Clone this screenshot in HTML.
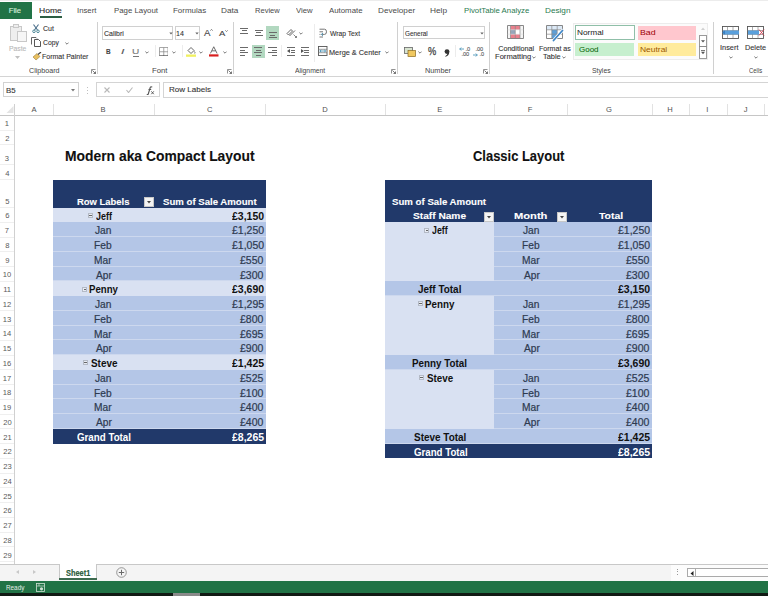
<!DOCTYPE html>
<html><head><meta charset="utf-8"><style>
html,body{margin:0;padding:0;}
body{width:768px;height:596px;overflow:hidden;position:relative;background:#fff;font-family:'Liberation Sans', sans-serif;}
</style></head><body>
<div style="position:absolute;left:0px;top:0px;width:768px;height:20px;background:#ffffff;"></div><div style="position:absolute;left:0px;top:0px;width:768px;height:1.4px;background:#ececec;"></div><div style="position:absolute;left:0px;top:2px;width:31.7px;height:16.7px;background:#217346;"></div><div style="position:absolute;left:40.3px;top:16.0px;width:21.8px;height:1.9px;background:#2d5e43;"></div><div style="position:absolute;left:0px;top:20px;width:768px;height:56px;background:#ffffff;"></div><div style="position:absolute;left:0px;top:75.6px;width:768px;height:1px;background:#d4d4d4;"></div><div style="position:absolute;left:96.5px;top:22px;width:1px;height:52px;background:#d0d0d0;"></div><div style="position:absolute;left:232.7px;top:22px;width:1px;height:52px;background:#d0d0d0;"></div><div style="position:absolute;left:396.8px;top:22px;width:1px;height:52px;background:#d0d0d0;"></div><div style="position:absolute;left:489.2px;top:22px;width:1px;height:52px;background:#d0d0d0;"></div><div style="position:absolute;left:713.4px;top:22px;width:1px;height:52px;background:#d0d0d0;"></div><svg style="position:absolute;left:90.5px;top:68.5px" width="5" height="5" viewBox="0 0 5 5"><path d="M0.5 4.5V0.5H4.5" fill="none" stroke="#777" stroke-width="0.8"/><path d="M1.5 1.5L4.5 4.5M4.5 2.5V4.5H2.5" fill="none" stroke="#555" stroke-width="0.8"/></svg><svg style="position:absolute;left:227.0px;top:68.5px" width="5" height="5" viewBox="0 0 5 5"><path d="M0.5 4.5V0.5H4.5" fill="none" stroke="#777" stroke-width="0.8"/><path d="M1.5 1.5L4.5 4.5M4.5 2.5V4.5H2.5" fill="none" stroke="#555" stroke-width="0.8"/></svg><svg style="position:absolute;left:390.8px;top:68.5px" width="5" height="5" viewBox="0 0 5 5"><path d="M0.5 4.5V0.5H4.5" fill="none" stroke="#777" stroke-width="0.8"/><path d="M1.5 1.5L4.5 4.5M4.5 2.5V4.5H2.5" fill="none" stroke="#555" stroke-width="0.8"/></svg><svg style="position:absolute;left:482.8px;top:68.5px" width="5" height="5" viewBox="0 0 5 5"><path d="M0.5 4.5V0.5H4.5" fill="none" stroke="#777" stroke-width="0.8"/><path d="M1.5 1.5L4.5 4.5M4.5 2.5V4.5H2.5" fill="none" stroke="#555" stroke-width="0.8"/></svg><svg style="position:absolute;left:9px;top:23px" width="20" height="20" viewBox="0 0 20 20"><rect x="1.5" y="3.5" width="11" height="14" fill="#eee" stroke="#c8c8c8"/><rect x="4.5" y="1.5" width="5" height="3" fill="#eee" stroke="#c8c8c8"/><rect x="8.5" y="8.5" width="9" height="10" fill="#f6f6f6" stroke="#c8c8c8"/></svg><svg style="position:absolute;left:15px;top:56px" width="5" height="3" viewBox="0 0 5 3"><path d="M0 0L2.5 3L5 0Z" fill="#c0c0c0"/></svg><svg style="position:absolute;left:32px;top:24px" width="8" height="9" viewBox="0 0 8 9"><path d="M1.5 0.5L5.5 6M6.5 0.5L2.5 6" stroke="#4a6e8a" stroke-width="1.1" fill="none"/><circle cx="2" cy="7.3" r="1.3" fill="none" stroke="#3f7f8f" stroke-width="0.9"/><circle cx="6" cy="7.3" r="1.3" fill="none" stroke="#3f7f8f" stroke-width="0.9"/></svg><svg style="position:absolute;left:31px;top:37px" width="10" height="10" viewBox="0 0 10 10"><path d="M0.5 7.5V0.5H5L6 1.5" fill="none" stroke="#555" stroke-width="0.9"/><path d="M3.5 2.5H7.5L9.5 4.5V9.5H3.5Z" fill="#fff" stroke="#444" stroke-width="0.9"/></svg><svg style="position:absolute;left:64.8px;top:42.2px" width="4" height="3" viewBox="0 0 4 3"><path d="M0.4 0.6L2 2.2L3.6 0.6" fill="none" stroke="#606060" stroke-width="0.85"/></svg><svg style="position:absolute;left:31.5px;top:51.5px" width="10" height="9" viewBox="0 0 10 9"><path d="M1 5L5 1.5L8 4.5L4 8Z" fill="#e8c060" stroke="#a08040" stroke-width="0.6"/><path d="M6 2.5L9 0" stroke="#444" stroke-width="1.2"/></svg><div style="position:absolute;left:102.1px;top:26.4px;width:71.4px;height:13.2px;background:#fff;box-sizing:border-box;border:1px solid #d0d0d0"></div><div style="position:absolute;left:175.2px;top:26.4px;width:25.3px;height:13.2px;background:#fff;box-sizing:border-box;border:1px solid #d0d0d0"></div><svg style="position:absolute;left:168.5px;top:32px" width="4" height="3" viewBox="0 0 4 3"><path d="M0.3 0.5L2 2.5L3.7 0.5Z" fill="#666"/></svg><svg style="position:absolute;left:194.8px;top:32px" width="4" height="3" viewBox="0 0 4 3"><path d="M0.3 0.5L2 2.5L3.7 0.5Z" fill="#666"/></svg><svg style="position:absolute;left:210.3px;top:29px" width="3" height="2" viewBox="0 0 3 2"><path d="M0.3 1.7L1.5 0.4L2.7 1.7" fill="none" stroke="#555" stroke-width="0.7"/></svg><svg style="position:absolute;left:224.8px;top:29.5px" width="3" height="2" viewBox="0 0 3 2"><path d="M0.3 0.3L1.5 1.6L2.7 0.3" fill="none" stroke="#555" stroke-width="0.7"/></svg><div style="position:absolute;left:121px;top:47.5px;font:italic 7.6px/7.6px 'Liberation Sans';color:#fff"></div><div style="position:absolute;left:133.4px;top:55.5px;width:5.3px;height:0.8px;background:#777;"></div><svg style="position:absolute;left:145.0px;top:50.5px" width="4" height="3" viewBox="0 0 4 3"><path d="M0.4 0.6L2 2.2L3.6 0.6" fill="none" stroke="#606060" stroke-width="0.85"/></svg><svg style="position:absolute;left:172.3px;top:50.5px" width="4" height="3" viewBox="0 0 4 3"><path d="M0.4 0.6L2 2.2L3.6 0.6" fill="none" stroke="#606060" stroke-width="0.85"/></svg><svg style="position:absolute;left:199.0px;top:50.5px" width="4" height="3" viewBox="0 0 4 3"><path d="M0.4 0.6L2 2.2L3.6 0.6" fill="none" stroke="#606060" stroke-width="0.85"/></svg><svg style="position:absolute;left:222.5px;top:50.5px" width="4" height="3" viewBox="0 0 4 3"><path d="M0.4 0.6L2 2.2L3.6 0.6" fill="none" stroke="#606060" stroke-width="0.85"/></svg><div style="position:absolute;left:154.5px;top:45px;width:0.7px;height:12px;background:#ececec;"></div><svg style="position:absolute;left:158.5px;top:46.6px" width="9.5" height="9.5" viewBox="0 0 10 10"><path d="M0.5 0.5H9.5V9.5H0.5ZM5 0.5V9.5M0.5 5H9.5" fill="none" stroke="#888" stroke-width="0.8"/><path d="M0.5 9.5H9.5" stroke="#333" stroke-width="1"/></svg><div style="position:absolute;left:181.7px;top:45px;width:0.7px;height:12px;background:#ececec;"></div><svg style="position:absolute;left:186px;top:46px" width="10" height="11" viewBox="0 0 10 11"><path d="M2 4.5L5 1.5L8 4.5L5 7.5Z" fill="none" stroke="#555" stroke-width="0.9"/><path d="M8.5 5.5Q9.5 7 8.7 7.5" stroke="#555" stroke-width="0.8" fill="none"/><rect x="0" y="8.5" width="10" height="2.3" fill="#f0f060"/></svg><svg style="position:absolute;left:209px;top:46px" width="9.5" height="11" viewBox="0 0 10 11"><path d="M1.5 7.5L5 0.5L8.5 7.5M3 4.8H7" fill="none" stroke="#555" stroke-width="0.9"/><rect x="0" y="8.5" width="10" height="2.3" fill="#d81e1e"/></svg><div style="position:absolute;left:266.2px;top:26.2px;width:12.699999999999989px;height:13.500000000000004px;background:#b2d8c0;"></div><div style="position:absolute;left:240.2px;top:28.0px;width:8.300000000000011px;height:0.9px;background:#6a6a6a;"></div><div style="position:absolute;left:241.7px;top:30.3px;width:5.300000000000011px;height:0.9px;background:#6a6a6a;"></div><div style="position:absolute;left:240.2px;top:32.6px;width:8.300000000000011px;height:0.9px;background:#6a6a6a;"></div><div style="position:absolute;left:254.5px;top:30.0px;width:8.300000000000011px;height:0.9px;background:#6a6a6a;"></div><div style="position:absolute;left:256.0px;top:32.3px;width:5.300000000000011px;height:0.9px;background:#6a6a6a;"></div><div style="position:absolute;left:254.5px;top:34.6px;width:8.300000000000011px;height:0.9px;background:#6a6a6a;"></div><div style="position:absolute;left:268.5px;top:32.2px;width:8.300000000000011px;height:0.9px;background:#6a6a6a;"></div><div style="position:absolute;left:270.0px;top:34.6px;width:5.300000000000011px;height:0.9px;background:#6a6a6a;"></div><div style="position:absolute;left:268.5px;top:37.0px;width:8.300000000000011px;height:0.9px;background:#6a6a6a;"></div><div style="position:absolute;left:252.1px;top:45.4px;width:12.500000000000028px;height:13.100000000000001px;background:#b2d8c0;"></div><div style="position:absolute;left:240.2px;top:47.3px;width:8.300000000000011px;height:0.9px;background:#6a6a6a;"></div><div style="position:absolute;left:254.2px;top:47.3px;width:8.300000000000011px;height:0.9px;background:#6a6a6a;"></div><div style="position:absolute;left:268.3px;top:47.3px;width:8.300000000000011px;height:0.9px;background:#6a6a6a;"></div><div style="position:absolute;left:240.2px;top:49.7px;width:5.0px;height:0.9px;background:#6a6a6a;"></div><div style="position:absolute;left:255.9px;top:49.7px;width:4.900000000000006px;height:0.9px;background:#6a6a6a;"></div><div style="position:absolute;left:271.6px;top:49.7px;width:5.0px;height:0.9px;background:#6a6a6a;"></div><div style="position:absolute;left:240.2px;top:52.1px;width:8.300000000000011px;height:0.9px;background:#6a6a6a;"></div><div style="position:absolute;left:254.2px;top:52.1px;width:8.300000000000011px;height:0.9px;background:#6a6a6a;"></div><div style="position:absolute;left:268.3px;top:52.1px;width:8.300000000000011px;height:0.9px;background:#6a6a6a;"></div><div style="position:absolute;left:240.2px;top:54.5px;width:5.0px;height:0.9px;background:#6a6a6a;"></div><div style="position:absolute;left:255.9px;top:54.5px;width:4.900000000000006px;height:0.9px;background:#6a6a6a;"></div><div style="position:absolute;left:271.6px;top:54.5px;width:5.0px;height:0.9px;background:#6a6a6a;"></div><div style="position:absolute;left:287.0px;top:47.3px;width:8.0px;height:0.9px;background:#6a6a6a;"></div><div style="position:absolute;left:290.5px;top:49.7px;width:4.5px;height:0.9px;background:#6a6a6a;"></div><div style="position:absolute;left:290.5px;top:52.1px;width:4.5px;height:0.9px;background:#6a6a6a;"></div><div style="position:absolute;left:287.0px;top:54.8px;width:8.0px;height:0.9px;background:#6a6a6a;"></div><svg style="position:absolute;left:287.0px;top:49.2px" width="3" height="4" viewBox="0 0 3 4"><path d="M0 2L3 0V4Z" fill="#555"/></svg><div style="position:absolute;left:300.6px;top:47.3px;width:8.0px;height:0.9px;background:#6a6a6a;"></div><div style="position:absolute;left:304.1px;top:49.7px;width:4.5px;height:0.9px;background:#6a6a6a;"></div><div style="position:absolute;left:304.1px;top:52.1px;width:4.5px;height:0.9px;background:#6a6a6a;"></div><div style="position:absolute;left:300.6px;top:54.8px;width:8.0px;height:0.9px;background:#6a6a6a;"></div><svg style="position:absolute;left:300.6px;top:49.2px" width="3" height="4" viewBox="0 0 3 4"><path d="M3 2L0 0V4Z" fill="#555"/></svg><svg style="position:absolute;left:285.5px;top:27.5px" width="11" height="10" viewBox="0 0 11 10"><path d="M1 5.5L5 1.5L6.5 3L2.5 7ZM3.5 8L9 2.5" fill="none" stroke="#555" stroke-width="0.9"/><path d="M7.5 6.5L10.5 9.5M9 9.5H10.5V8" fill="none" stroke="#666" stroke-width="0.8"/></svg><svg style="position:absolute;left:298.5px;top:32px" width="4" height="3" viewBox="0 0 4 3"><path d="M0.4 0.6L2 2.2L3.6 0.6" fill="none" stroke="#606060" stroke-width="0.85"/></svg><div style="position:absolute;left:281.3px;top:45px;width:0.7px;height:12px;background:#ececec;"></div><div style="position:absolute;left:313.8px;top:24px;width:0.7px;height:38px;background:#ececec;"></div><svg style="position:absolute;left:318.8px;top:27.5px" width="8" height="10" viewBox="0 0 8 10"><path d="M0.5 1.2H5.5Q7.5 1.2 7.5 3.8Q7.5 6.4 5.5 6.4H3" fill="none" stroke="#666" stroke-width="0.9"/><path d="M0.5 3.8H4M0.5 6.4H1.5M0.5 9H4" stroke="#666" stroke-width="0.9"/><path d="M4 5L2.3 6.4L4 7.8" fill="none" stroke="#3a8ab0" stroke-width="0.9"/></svg><svg style="position:absolute;left:318px;top:46px" width="9.5" height="10" viewBox="0 0 9.5 10"><rect x="0.5" y="0.5" width="8.5" height="9" fill="#fff" stroke="#555" stroke-width="0.9"/><path d="M0.5 3.3H9M0.5 6.7H9" stroke="#777" stroke-width="0.7"/><path d="M1.8 5H7.7M3.2 3.9L1.8 5L3.2 6.1M6.3 3.9L7.7 5L6.3 6.1" stroke="#3a8ab0" stroke-width="0.8" fill="none"/></svg><svg style="position:absolute;left:385px;top:50.5px" width="4" height="3" viewBox="0 0 4 3"><path d="M0.4 0.6L2 2.2L3.6 0.6" fill="none" stroke="#606060" stroke-width="0.85"/></svg><div style="position:absolute;left:402.6px;top:26.2px;width:82.1px;height:13.3px;background:#fff;box-sizing:border-box;border:1px solid #d0d0d0"></div><svg style="position:absolute;left:479.5px;top:32px" width="4" height="3" viewBox="0 0 4 3"><path d="M0.3 0.5L2 2.5L3.7 0.5Z" fill="#666"/></svg><svg style="position:absolute;left:404px;top:46.5px" width="12" height="10" viewBox="0 0 12 10"><rect x="0.5" y="0.5" width="8" height="6" fill="#d8e4d0" stroke="#666" stroke-width="0.8"/><rect x="4" y="3.5" width="7.5" height="6" fill="#f0c860" stroke="#8a6a20" stroke-width="0.7"/></svg><svg style="position:absolute;left:418px;top:50.5px" width="4" height="3" viewBox="0 0 4 3"><path d="M0.4 0.6L2 2.2L3.6 0.6" fill="none" stroke="#606060" stroke-width="0.85"/></svg><svg style="position:absolute;left:444px;top:48.5px" width="6" height="8" viewBox="0 0 6 8"><circle cx="3" cy="2.6" r="2.4" fill="#333"/><path d="M5.2 3Q5.4 6.5 1.5 7.8L1.2 7.2Q3.5 6 3.6 4Z" fill="#333"/></svg><div style="position:absolute;left:455px;top:45px;width:0.7px;height:12px;background:#ececec;"></div><svg style="position:absolute;left:459.2px;top:47.3px" width="5" height="4" viewBox="0 0 5 4"><path d="M5 2H0.7M2.2 0.5L0.7 2L2.2 3.5" stroke="#3a8ab0" stroke-width="0.8" fill="none"/></svg><svg style="position:absolute;left:473.3px;top:52.5px" width="5" height="4" viewBox="0 0 5 4"><path d="M0 2H4.3M2.8 0.5L4.3 2L2.8 3.5" stroke="#3a8ab0" stroke-width="0.8" fill="none"/></svg><svg style="position:absolute;left:507.3px;top:25.2px" width="17" height="14" viewBox="0 0 17 14"><rect x="0.5" y="0.5" width="16" height="13" fill="#f6f6f6"/><rect x="3.5" y="0.5" width="9.5" height="4.3" fill="#e9808c"/><rect x="3.5" y="9.2" width="9.5" height="4.3" fill="#e9808c"/><rect x="3.5" y="4.8" width="4.8" height="4.4" fill="#97a6ba"/><rect x="8.3" y="4.8" width="4.7" height="4.4" fill="#ffffff"/><path d="M0.5 0.5H16.5V13.5H0.5Z" fill="none" stroke="#7a7a7a" stroke-width="0.9"/><path d="M3.5 0.5V13.5M8.3 0.5V13.5M13 0.5V13.5" stroke="#8a8a8a" stroke-width="0.7"/><path d="M0.5 4.8H16.5M0.5 9.2H16.5" stroke="#d8d8d8" stroke-width="0.5"/></svg><svg style="position:absolute;left:532px;top:56px" width="4" height="3" viewBox="0 0 4 3"><path d="M0.4 0.6L2 2.2L3.6 0.6" fill="none" stroke="#606060" stroke-width="0.85"/></svg><svg style="position:absolute;left:546.3px;top:25px" width="19" height="17" viewBox="0 0 19 17"><rect x="0.5" y="0.5" width="16" height="13" fill="#ffffff"/><rect x="0.5" y="0.5" width="16" height="4.3" fill="#dce9f6"/><rect x="5.8" y="4.8" width="5.4" height="8.7" fill="#5d9fd8"/><path d="M0.5 0.5H16.5V13.5H0.5Z" fill="none" stroke="#7a7a7a" stroke-width="0.9"/><path d="M5.8 0.5V13.5M11.2 0.5V13.5M0.5 4.8H16.5M0.5 9.2H16.5" stroke="#8a8a8a" stroke-width="0.7"/><path d="M7.5 15.5L16.5 5.5" stroke="#ffffff" stroke-width="3.2" stroke-linecap="round"/><path d="M7.5 15.5L16.5 5.5" stroke="#3f86c6" stroke-width="1.8" stroke-linecap="round"/></svg><svg style="position:absolute;left:562px;top:56px" width="4" height="3" viewBox="0 0 4 3"><path d="M0.4 0.6L2 2.2L3.6 0.6" fill="none" stroke="#606060" stroke-width="0.85"/></svg><div style="position:absolute;left:572.5px;top:22.6px;width:135.5px;height:37.6px;background:#fbfbfb;box-sizing:border-box;border:1px solid #ececec"></div><div style="position:absolute;left:574.6px;top:25.3px;width:60.4px;height:15px;background:#ffffff;box-sizing:border-box;border:1.3px solid #8fbfa8"></div><div style="position:absolute;left:638.0px;top:26.0px;width:57.8px;height:14.3px;background:#ffc7ce;"></div><div style="position:absolute;left:575.0px;top:42.6px;width:59.0px;height:13.3px;background:#c6efce;"></div><div style="position:absolute;left:638.0px;top:42.6px;width:57.8px;height:13.3px;background:#ffeb9c;"></div><div style="position:absolute;left:698.5px;top:35.1px;width:8.8px;height:24.0px;background:#fff;box-sizing:border-box;border:0.9px solid #9a9a9a"></div><div style="position:absolute;left:698.5px;top:46.0px;width:8.8px;height:0.9px;background:#8a8a8a;"></div><svg style="position:absolute;left:701px;top:27.3px" width="4" height="3" viewBox="0 0 4 3"><path d="M0 3L2 0.5L4 3Z" fill="#d0d0d0"/></svg><svg style="position:absolute;left:701px;top:40px" width="4" height="3" viewBox="0 0 4 3"><path d="M0 0.3L2 2.6L4 0.3Z" fill="#555"/></svg><svg style="position:absolute;left:701px;top:50px" width="4" height="5" viewBox="0 0 4 5"><path d="M0 0.5H4" stroke="#555" stroke-width="0.8"/><path d="M0 1.8L2 4.3L4 1.8Z" fill="#555"/></svg><svg style="position:absolute;left:722.4px;top:25.5px" width="18" height="13" viewBox="0 0 18 13"><rect x="0.5" y="0.5" width="16" height="12" fill="#fff" stroke="#555" stroke-width="0.9"/><path d="M0.5 4.5H16.5M0.5 8.5H16.5M5.5 0.5V12.5M11 0.5V12.5" stroke="#777" stroke-width="0.6"/><rect x="1" y="4.5" width="16" height="4" fill="#5aa0dc"/><path d="M0 6.5L3 4.5V8.5Z" fill="#3a7fc0"/></svg><svg style="position:absolute;left:747.1px;top:25.5px" width="18" height="13" viewBox="0 0 18 13"><rect x="0.5" y="0.5" width="16" height="12" fill="#fff" stroke="#555" stroke-width="0.9"/><path d="M0.5 4.5H16.5M0.5 8.5H16.5M5.5 0.5V12.5M11 0.5V12.5" stroke="#777" stroke-width="0.6"/><rect x="1" y="4.5" width="11" height="4" fill="#5aa0dc"/><path d="M12 3.5L17 9.5M17 3.5L12 9.5" stroke="#d04050" stroke-width="0.9"/></svg><svg style="position:absolute;left:728.5px;top:56px" width="4" height="3" viewBox="0 0 4 3"><path d="M0.4 0.6L2 2.2L3.6 0.6" fill="none" stroke="#606060" stroke-width="0.85"/></svg><svg style="position:absolute;left:753.5px;top:56px" width="4" height="3" viewBox="0 0 4 3"><path d="M0.4 0.6L2 2.2L3.6 0.6" fill="none" stroke="#606060" stroke-width="0.85"/></svg><div style="position:absolute;left:0px;top:76.6px;width:768px;height:27px;background:#ffffff;"></div><div style="position:absolute;left:3.3px;top:82.4px;width:75.5px;height:15px;background:#fff;box-sizing:border-box;border:1px solid #d2d2d2"></div><svg style="position:absolute;left:70.5px;top:88.8px" width="4" height="3" viewBox="0 0 4 3"><path d="M0 0L2 2.5L4 0Z" fill="#777"/></svg><div style="position:absolute;left:86.8px;top:87.0px;width:0.8px;height:0.8px;background:#c0c0c0;"></div><div style="position:absolute;left:86.8px;top:89.8px;width:0.8px;height:0.8px;background:#c0c0c0;"></div><div style="position:absolute;left:86.8px;top:92.6px;width:0.8px;height:0.8px;background:#c0c0c0;"></div><div style="position:absolute;left:96.2px;top:82.4px;width:64.2px;height:15px;background:#fff;box-sizing:border-box;border:1px solid #d4d4d4"></div><svg style="position:absolute;left:104.3px;top:87.3px" width="6" height="6" viewBox="0 0 6 6"><path d="M0.5 0.5L5.5 5.5M5.5 0.5L0.5 5.5" stroke="#b8b8b8" stroke-width="1.1"/></svg><svg style="position:absolute;left:125.5px;top:87.3px" width="7" height="6" viewBox="0 0 7 6"><path d="M0.5 3L2.5 5.5L6.5 0.5" fill="none" stroke="#b8b8b8" stroke-width="1.1"/></svg><svg style="position:absolute;left:145.5px;top:85.5px" width="9" height="9" viewBox="0 0 9 9"><path d="M6.2 1.2Q5 0.3 4.2 1.5L2.2 8.2Q1.8 9 0.8 8.4M2.5 3.5H5.2" fill="none" stroke="#555" stroke-width="1.1"/><path d="M5.3 5.3L7.8 8.2M7.8 5.3L5.3 8.2" stroke="#555" stroke-width="0.9"/></svg><div style="position:absolute;left:163px;top:82.4px;width:610px;height:15.4px;background:#fff;box-sizing:border-box;border:1px solid #d4d4d4"></div><div style="position:absolute;left:0px;top:103.5px;width:768px;height:12px;background:#ffffff;"></div><div style="position:absolute;left:0px;top:115.0px;width:768px;height:1px;background:#c6c6c6;"></div><div style="position:absolute;left:14px;top:103.5px;width:1px;height:460.5px;background:#d0d0d0;"></div><svg style="position:absolute;left:6px;top:105.5px" width="7.5" height="7.5" viewBox="0 0 9 9"><path d="M9 0V9H0Z" fill="#e4e4e4"/></svg><div style="position:absolute;left:53px;top:103.5px;width:0.8px;height:11.5px;background:#e2e2e2;"></div><div style="position:absolute;left:154px;top:103.5px;width:0.8px;height:11.5px;background:#e2e2e2;"></div><div style="position:absolute;left:265px;top:103.5px;width:0.8px;height:11.5px;background:#e2e2e2;"></div><div style="position:absolute;left:385.3px;top:103.5px;width:0.8px;height:11.5px;background:#e2e2e2;"></div><div style="position:absolute;left:494px;top:103.5px;width:0.8px;height:11.5px;background:#e2e2e2;"></div><div style="position:absolute;left:566.5px;top:103.5px;width:0.8px;height:11.5px;background:#e2e2e2;"></div><div style="position:absolute;left:651.5px;top:103.5px;width:0.8px;height:11.5px;background:#e2e2e2;"></div><div style="position:absolute;left:689px;top:103.5px;width:0.8px;height:11.5px;background:#e2e2e2;"></div><div style="position:absolute;left:726.5px;top:103.5px;width:0.8px;height:11.5px;background:#e2e2e2;"></div><div style="position:absolute;left:764px;top:103.5px;width:0.8px;height:11.5px;background:#e2e2e2;"></div><div style="position:absolute;left:0px;top:115.5px;width:14px;height:448.5px;background:#ffffff;"></div><div style="position:absolute;left:0px;top:129.5px;width:14px;height:0.8px;background:#efefef;"></div><div style="position:absolute;left:0px;top:144.1px;width:14px;height:0.8px;background:#efefef;"></div><div style="position:absolute;left:0px;top:164.1px;width:14px;height:0.8px;background:#efefef;"></div><div style="position:absolute;left:0px;top:179.0px;width:14px;height:0.8px;background:#efefef;"></div><div style="position:absolute;left:0px;top:207.0px;width:14px;height:0.8px;background:#efefef;"></div><div style="position:absolute;left:0px;top:221.75px;width:14px;height:0.8px;background:#efefef;"></div><div style="position:absolute;left:0px;top:236.5px;width:14px;height:0.8px;background:#efefef;"></div><div style="position:absolute;left:0px;top:251.25px;width:14px;height:0.8px;background:#efefef;"></div><div style="position:absolute;left:0px;top:266.0px;width:14px;height:0.8px;background:#efefef;"></div><div style="position:absolute;left:0px;top:280.75px;width:14px;height:0.8px;background:#efefef;"></div><div style="position:absolute;left:0px;top:295.5px;width:14px;height:0.8px;background:#efefef;"></div><div style="position:absolute;left:0px;top:310.25px;width:14px;height:0.8px;background:#efefef;"></div><div style="position:absolute;left:0px;top:325.0px;width:14px;height:0.8px;background:#efefef;"></div><div style="position:absolute;left:0px;top:339.75px;width:14px;height:0.8px;background:#efefef;"></div><div style="position:absolute;left:0px;top:354.5px;width:14px;height:0.8px;background:#efefef;"></div><div style="position:absolute;left:0px;top:369.25px;width:14px;height:0.8px;background:#efefef;"></div><div style="position:absolute;left:0px;top:384.0px;width:14px;height:0.8px;background:#efefef;"></div><div style="position:absolute;left:0px;top:398.75px;width:14px;height:0.8px;background:#efefef;"></div><div style="position:absolute;left:0px;top:413.5px;width:14px;height:0.8px;background:#efefef;"></div><div style="position:absolute;left:0px;top:428.25px;width:14px;height:0.8px;background:#efefef;"></div><div style="position:absolute;left:0px;top:443.0px;width:14px;height:0.8px;background:#efefef;"></div><div style="position:absolute;left:0px;top:457.75px;width:14px;height:0.8px;background:#efefef;"></div><div style="position:absolute;left:0px;top:472.5px;width:14px;height:0.8px;background:#efefef;"></div><div style="position:absolute;left:0px;top:487.25px;width:14px;height:0.8px;background:#efefef;"></div><div style="position:absolute;left:0px;top:502.0px;width:14px;height:0.8px;background:#efefef;"></div><div style="position:absolute;left:0px;top:516.75px;width:14px;height:0.8px;background:#efefef;"></div><div style="position:absolute;left:0px;top:531.5px;width:14px;height:0.8px;background:#efefef;"></div><div style="position:absolute;left:0px;top:546.25px;width:14px;height:0.8px;background:#efefef;"></div><div style="position:absolute;left:0px;top:561.0px;width:14px;height:0.8px;background:#efefef;"></div><div style="position:absolute;left:52.9px;top:179.5px;width:212.70000000000002px;height:28.0px;background:#21396a;"></div><div style="position:absolute;left:143.9px;top:197.0px;width:10px;height:10px;background:#f4f4f4;box-sizing:border-box;border:0.6px solid #c8c8c8"></div><svg style="position:absolute;left:146.9px;top:201.0px" width="4" height="3" viewBox="0 0 4 3"><path d="M0 0L2 2.5L4 0Z" fill="#444"/></svg><div style="position:absolute;left:52.9px;top:207.5px;width:212.70000000000002px;height:14.75px;background:#d9e1f2;"></div><div style="position:absolute;left:52.9px;top:222.25px;width:212.70000000000002px;height:14.75px;background:#b4c6e7;"></div><div style="position:absolute;left:52.9px;top:236.2px;width:212.70000000000002px;height:0.8px;background:#cdd8ee;"></div><div style="position:absolute;left:52.9px;top:237.0px;width:212.70000000000002px;height:14.75px;background:#b4c6e7;"></div><div style="position:absolute;left:52.9px;top:250.95px;width:212.70000000000002px;height:0.8px;background:#cdd8ee;"></div><div style="position:absolute;left:52.9px;top:251.75px;width:212.70000000000002px;height:14.75px;background:#b4c6e7;"></div><div style="position:absolute;left:52.9px;top:265.7px;width:212.70000000000002px;height:0.8px;background:#cdd8ee;"></div><div style="position:absolute;left:52.9px;top:266.5px;width:212.70000000000002px;height:14.75px;background:#b4c6e7;"></div><div style="position:absolute;left:52.9px;top:280.45px;width:212.70000000000002px;height:0.8px;background:#cdd8ee;"></div><div style="position:absolute;left:52.9px;top:281.25px;width:212.70000000000002px;height:14.75px;background:#d9e1f2;"></div><div style="position:absolute;left:52.9px;top:296.0px;width:212.70000000000002px;height:14.75px;background:#b4c6e7;"></div><div style="position:absolute;left:52.9px;top:309.95px;width:212.70000000000002px;height:0.8px;background:#cdd8ee;"></div><div style="position:absolute;left:52.9px;top:310.75px;width:212.70000000000002px;height:14.75px;background:#b4c6e7;"></div><div style="position:absolute;left:52.9px;top:324.7px;width:212.70000000000002px;height:0.8px;background:#cdd8ee;"></div><div style="position:absolute;left:52.9px;top:325.5px;width:212.70000000000002px;height:14.75px;background:#b4c6e7;"></div><div style="position:absolute;left:52.9px;top:339.45px;width:212.70000000000002px;height:0.8px;background:#cdd8ee;"></div><div style="position:absolute;left:52.9px;top:340.25px;width:212.70000000000002px;height:14.75px;background:#b4c6e7;"></div><div style="position:absolute;left:52.9px;top:354.2px;width:212.70000000000002px;height:0.8px;background:#cdd8ee;"></div><div style="position:absolute;left:52.9px;top:355.0px;width:212.70000000000002px;height:14.75px;background:#d9e1f2;"></div><div style="position:absolute;left:52.9px;top:369.75px;width:212.70000000000002px;height:14.75px;background:#b4c6e7;"></div><div style="position:absolute;left:52.9px;top:383.7px;width:212.70000000000002px;height:0.8px;background:#cdd8ee;"></div><div style="position:absolute;left:52.9px;top:384.5px;width:212.70000000000002px;height:14.75px;background:#b4c6e7;"></div><div style="position:absolute;left:52.9px;top:398.45px;width:212.70000000000002px;height:0.8px;background:#cdd8ee;"></div><div style="position:absolute;left:52.9px;top:399.25px;width:212.70000000000002px;height:14.75px;background:#b4c6e7;"></div><div style="position:absolute;left:52.9px;top:413.2px;width:212.70000000000002px;height:0.8px;background:#cdd8ee;"></div><div style="position:absolute;left:52.9px;top:414.0px;width:212.70000000000002px;height:14.75px;background:#b4c6e7;"></div><div style="position:absolute;left:52.9px;top:427.95px;width:212.70000000000002px;height:0.8px;background:#cdd8ee;"></div><div style="position:absolute;left:52.9px;top:428.75px;width:212.70000000000002px;height:14.75px;background:#21396a;"></div><div style="position:absolute;left:385.1px;top:179.5px;width:266.5px;height:42.75px;background:#21396a;"></div><div style="position:absolute;left:484.2px;top:212.0px;width:10px;height:10px;background:#f4f4f4;box-sizing:border-box;border:0.6px solid #c8c8c8"></div><svg style="position:absolute;left:487.2px;top:216.0px" width="4" height="3" viewBox="0 0 4 3"><path d="M0 0L2 2.5L4 0Z" fill="#444"/></svg><div style="position:absolute;left:557.3px;top:212.0px;width:10px;height:10px;background:#f4f4f4;box-sizing:border-box;border:0.6px solid #c8c8c8"></div><svg style="position:absolute;left:560.3px;top:216.0px" width="4" height="3" viewBox="0 0 4 3"><path d="M0 0L2 2.5L4 0Z" fill="#444"/></svg><div style="position:absolute;left:385.1px;top:222.25px;width:108.89999999999998px;height:59.0px;background:#d9e1f2;"></div><div style="position:absolute;left:494.0px;top:222.25px;width:157.60000000000002px;height:14.75px;background:#b4c6e7;"></div><div style="position:absolute;left:494.0px;top:236.2px;width:157.60000000000002px;height:0.8px;background:#cdd8ee;"></div><div style="position:absolute;left:494.0px;top:237.0px;width:157.60000000000002px;height:14.75px;background:#b4c6e7;"></div><div style="position:absolute;left:494.0px;top:250.95px;width:157.60000000000002px;height:0.8px;background:#cdd8ee;"></div><div style="position:absolute;left:494.0px;top:251.75px;width:157.60000000000002px;height:14.75px;background:#b4c6e7;"></div><div style="position:absolute;left:494.0px;top:265.7px;width:157.60000000000002px;height:0.8px;background:#cdd8ee;"></div><div style="position:absolute;left:494.0px;top:266.5px;width:157.60000000000002px;height:14.75px;background:#b4c6e7;"></div><div style="position:absolute;left:494.0px;top:280.45px;width:157.60000000000002px;height:0.8px;background:#cdd8ee;"></div><div style="position:absolute;left:385.1px;top:281.25px;width:266.5px;height:14.75px;background:#b4c6e7;"></div><div style="position:absolute;left:385.1px;top:295.2px;width:266.5px;height:0.8px;background:#cdd8ee;"></div><div style="position:absolute;left:385.1px;top:296.0px;width:108.89999999999998px;height:59.0px;background:#d9e1f2;"></div><div style="position:absolute;left:494.0px;top:296.0px;width:157.60000000000002px;height:14.75px;background:#b4c6e7;"></div><div style="position:absolute;left:494.0px;top:309.95px;width:157.60000000000002px;height:0.8px;background:#cdd8ee;"></div><div style="position:absolute;left:494.0px;top:310.75px;width:157.60000000000002px;height:14.75px;background:#b4c6e7;"></div><div style="position:absolute;left:494.0px;top:324.7px;width:157.60000000000002px;height:0.8px;background:#cdd8ee;"></div><div style="position:absolute;left:494.0px;top:325.5px;width:157.60000000000002px;height:14.75px;background:#b4c6e7;"></div><div style="position:absolute;left:494.0px;top:339.45px;width:157.60000000000002px;height:0.8px;background:#cdd8ee;"></div><div style="position:absolute;left:494.0px;top:340.25px;width:157.60000000000002px;height:14.75px;background:#b4c6e7;"></div><div style="position:absolute;left:494.0px;top:354.2px;width:157.60000000000002px;height:0.8px;background:#cdd8ee;"></div><div style="position:absolute;left:385.1px;top:355.0px;width:266.5px;height:14.75px;background:#b4c6e7;"></div><div style="position:absolute;left:385.1px;top:368.95px;width:266.5px;height:0.8px;background:#cdd8ee;"></div><div style="position:absolute;left:385.1px;top:369.75px;width:108.89999999999998px;height:59.0px;background:#d9e1f2;"></div><div style="position:absolute;left:494.0px;top:369.75px;width:157.60000000000002px;height:14.75px;background:#b4c6e7;"></div><div style="position:absolute;left:494.0px;top:383.7px;width:157.60000000000002px;height:0.8px;background:#cdd8ee;"></div><div style="position:absolute;left:494.0px;top:384.5px;width:157.60000000000002px;height:14.75px;background:#b4c6e7;"></div><div style="position:absolute;left:494.0px;top:398.45px;width:157.60000000000002px;height:0.8px;background:#cdd8ee;"></div><div style="position:absolute;left:494.0px;top:399.25px;width:157.60000000000002px;height:14.75px;background:#b4c6e7;"></div><div style="position:absolute;left:494.0px;top:413.2px;width:157.60000000000002px;height:0.8px;background:#cdd8ee;"></div><div style="position:absolute;left:494.0px;top:414.0px;width:157.60000000000002px;height:14.75px;background:#b4c6e7;"></div><div style="position:absolute;left:494.0px;top:427.95px;width:157.60000000000002px;height:0.8px;background:#cdd8ee;"></div><div style="position:absolute;left:385.1px;top:428.75px;width:266.5px;height:14.75px;background:#b4c6e7;"></div><div style="position:absolute;left:385.1px;top:442.7px;width:266.5px;height:0.8px;background:#cdd8ee;"></div><div style="position:absolute;left:385.1px;top:443.5px;width:266.5px;height:14.75px;background:#21396a;"></div><div style="position:absolute;left:0px;top:563.8px;width:768px;height:17px;background:#f4f4f4;"></div><div style="position:absolute;left:0px;top:563.8px;width:768px;height:0.9px;background:#c8c8c8;"></div><div style="position:absolute;left:59.2px;top:564.2px;width:37.4px;height:15.5px;background:#ffffff;"></div><div style="position:absolute;left:59.2px;top:563.8px;width:0.8px;height:15.8px;background:#c8c8c8;"></div><div style="position:absolute;left:96.0px;top:563.8px;width:0.8px;height:15.8px;background:#c8c8c8;"></div><div style="position:absolute;left:59.2px;top:578.0px;width:37.4px;height:1.6px;background:#3d6b4f;"></div><svg style="position:absolute;left:15.5px;top:570px" width="3" height="4" viewBox="0 0 3 4"><path d="M3 0L0 2L3 4Z" fill="#c8c8c8"/></svg><svg style="position:absolute;left:32.5px;top:570px" width="3" height="4" viewBox="0 0 3 4"><path d="M0 0L3 2L0 4Z" fill="#c8c8c8"/></svg><svg style="position:absolute;left:115.5px;top:566.5px" width="11" height="11" viewBox="0 0 11 11"><circle cx="5.5" cy="5.5" r="4.8" fill="none" stroke="#8a8a8a" stroke-width="0.9"/><path d="M5.5 2.8V8.2M2.8 5.5H8.2" stroke="#6a6a6a" stroke-width="1"/></svg><div style="position:absolute;left:671px;top:564.7px;width:97px;height:16px;background:#fcfcfc;"></div><div style="position:absolute;left:676.6px;top:568.5px;width:0.9px;height:0.9px;background:#999;"></div><div style="position:absolute;left:676.6px;top:571.3px;width:0.9px;height:0.9px;background:#999;"></div><div style="position:absolute;left:676.6px;top:574.1px;width:0.9px;height:0.9px;background:#999;"></div><div style="position:absolute;left:687.4px;top:568.4px;width:90px;height:8.8px;background:#ffffff;box-sizing:border-box;border:0.8px solid #aaa"></div><div style="position:absolute;left:695.2px;top:568.4px;width:0.8px;height:8.8px;background:#aaa;"></div><svg style="position:absolute;left:689.8px;top:570.5px" width="4" height="5" viewBox="0 0 4 5"><path d="M3.5 0L0.5 2.5L3.5 5Z" fill="#222"/></svg><div style="position:absolute;left:0px;top:580.8px;width:768px;height:12.2px;background:#217346;"></div><svg style="position:absolute;left:36px;top:582.5px" width="9" height="9" viewBox="0 0 9 9"><rect x="0.5" y="0.5" width="8" height="8" fill="none" stroke="#cfe0d4" stroke-width="0.8"/><path d="M0.5 3H8.5M3 0.5V3" stroke="#cfe0d4" stroke-width="0.7"/><circle cx="5.5" cy="5.8" r="1.6" fill="#cfe0d4"/></svg><div style="position:absolute;left:0px;top:593.0px;width:768px;height:3.0px;background:#111a14;"></div><div style="position:absolute;left:172.8px;top:593.0px;width:27.4px;height:3.0px;background:#8a8a8a;"></div><div style="position:absolute;left:88.1px;top:212.79999999999998px;width:5px;height:5px;box-sizing:border-box;border:0.6px solid #b4bac6;background:#e8ecf5"></div><div style="position:absolute;left:89.3px;top:214.95px;width:2.6px;height:0.7px;background:#666;"></div><div style="position:absolute;left:82.3px;top:286.55px;width:5px;height:5px;box-sizing:border-box;border:0.6px solid #b4bac6;background:#e8ecf5"></div><div style="position:absolute;left:83.5px;top:288.7px;width:2.6px;height:0.7px;background:#666;"></div><div style="position:absolute;left:83.0px;top:360.3px;width:5px;height:5px;box-sizing:border-box;border:0.6px solid #b4bac6;background:#e8ecf5"></div><div style="position:absolute;left:84.2px;top:362.45px;width:2.6px;height:0.7px;background:#666;"></div><div style="position:absolute;left:424.3px;top:227.54999999999998px;width:5px;height:5px;box-sizing:border-box;border:0.6px solid #b4bac6;background:#e8ecf5"></div><div style="position:absolute;left:425.5px;top:229.7px;width:2.6px;height:0.7px;background:#666;"></div><div style="position:absolute;left:417.90000000000003px;top:301.3px;width:5px;height:5px;box-sizing:border-box;border:0.6px solid #b4bac6;background:#e8ecf5"></div><div style="position:absolute;left:419.1px;top:303.45px;width:2.6px;height:0.7px;background:#666;"></div><div style="position:absolute;left:419.0px;top:375.05px;width:5px;height:5px;box-sizing:border-box;border:0.6px solid #b4bac6;background:#e8ecf5"></div><div style="position:absolute;left:420.2px;top:377.2px;width:2.6px;height:0.7px;background:#666;"></div>
<div style="position:absolute;left:8.80px;top:7.37px;font-size:7.6px;line-height:7.6px;font-weight:normal;font-style:normal;color:#d8eedd;white-space:pre;-webkit-text-stroke:0.15px #d8eedd;">File</div><div style="position:absolute;left:39.27px;top:7.37px;font-size:7.6px;line-height:7.6px;font-weight:normal;font-style:normal;color:#262626;white-space:pre;transform:scaleX(1.1263);transform-origin:0 0;-webkit-text-stroke:0.1px #262626;">Home</div><div style="position:absolute;left:77.38px;top:7.37px;font-size:7.6px;line-height:7.6px;font-weight:normal;font-style:normal;color:#4a4a4a;white-space:pre;transform:scaleX(1.0222);transform-origin:0 0;">Insert</div><div style="position:absolute;left:113.87px;top:7.37px;font-size:7.6px;line-height:7.6px;font-weight:normal;font-style:normal;color:#4a4a4a;white-space:pre;transform:scaleX(1.0317);transform-origin:0 0;">Page Layout</div><div style="position:absolute;left:173.45px;top:7.37px;font-size:7.6px;line-height:7.6px;font-weight:normal;font-style:normal;color:#4a4a4a;white-space:pre;transform:scaleX(1.0500);transform-origin:0 0;">Formulas</div><div style="position:absolute;left:221.21px;top:7.37px;font-size:7.6px;line-height:7.6px;font-weight:normal;font-style:normal;color:#4a4a4a;white-space:pre;transform:scaleX(1.0867);transform-origin:0 0;">Data</div><div style="position:absolute;left:254.51px;top:7.37px;font-size:7.6px;line-height:7.6px;font-weight:normal;font-style:normal;color:#4a4a4a;white-space:pre;transform:scaleX(0.9917);transform-origin:0 0;">Review</div><div style="position:absolute;left:295.50px;top:7.37px;font-size:7.6px;line-height:7.6px;font-weight:normal;font-style:normal;color:#4a4a4a;white-space:pre;transform:scaleX(1.0188);transform-origin:0 0;">View</div><div style="position:absolute;left:329.00px;top:7.37px;font-size:7.6px;line-height:7.6px;font-weight:normal;font-style:normal;color:#4a4a4a;white-space:pre;transform:scaleX(1.0312);transform-origin:0 0;">Automate</div><div style="position:absolute;left:378.33px;top:7.37px;font-size:7.6px;line-height:7.6px;font-weight:normal;font-style:normal;color:#4a4a4a;white-space:pre;transform:scaleX(1.0727);transform-origin:0 0;">Developer</div><div style="position:absolute;left:430.11px;top:7.37px;font-size:7.6px;line-height:7.6px;font-weight:normal;font-style:normal;color:#4a4a4a;white-space:pre;transform:scaleX(1.0933);transform-origin:0 0;">Help</div><div style="position:absolute;left:463.98px;top:7.37px;font-size:7.6px;line-height:7.6px;font-weight:normal;font-style:normal;color:#2a7a50;white-space:pre;transform:scaleX(1.0242);transform-origin:0 0;">PivotTable Analyze</div><div style="position:absolute;left:544.92px;top:7.37px;font-size:7.6px;line-height:7.6px;font-weight:normal;font-style:normal;color:#2a7a50;white-space:pre;transform:scaleX(1.0773);transform-origin:0 0;">Design</div><div style="position:absolute;left:28.90px;top:67.41px;font-size:7.2px;line-height:7.2px;font-weight:normal;font-style:normal;color:#444;white-space:pre;transform:scaleX(0.9933);transform-origin:0 0;">Clipboard</div><div style="position:absolute;left:152.42px;top:67.41px;font-size:7.2px;line-height:7.2px;font-weight:normal;font-style:normal;color:#444;white-space:pre;transform:scaleX(1.0769);transform-origin:0 0;">Font</div><div style="position:absolute;left:295.30px;top:67.41px;font-size:7.2px;line-height:7.2px;font-weight:normal;font-style:normal;color:#444;white-space:pre;transform:scaleX(0.9469);transform-origin:0 0;">Alignment</div><div style="position:absolute;left:425.48px;top:67.41px;font-size:7.2px;line-height:7.2px;font-weight:normal;font-style:normal;color:#444;white-space:pre;transform:scaleX(1.0167);transform-origin:0 0;">Number</div><div style="position:absolute;left:591.95px;top:67.41px;font-size:7.2px;line-height:7.2px;font-weight:normal;font-style:normal;color:#444;white-space:pre;transform:scaleX(0.9500);transform-origin:0 0;">Styles</div><div style="position:absolute;left:749.00px;top:67.41px;font-size:7.2px;line-height:7.2px;font-weight:normal;font-style:normal;color:#444;white-space:pre;transform:scaleX(0.8250);transform-origin:0 0;">Cells</div><div style="position:absolute;left:8.56px;top:45.21px;font-size:7.2px;line-height:7.2px;font-weight:normal;font-style:normal;color:#b8b8b8;white-space:pre;transform:scaleX(0.9412);transform-origin:0 0;-webkit-text-stroke:0.1px #b8b8b8;">Paste</div><div style="position:absolute;left:42.60px;top:25.31px;font-size:7.2px;line-height:7.2px;font-weight:normal;font-style:normal;color:#333;white-space:pre;transform:scaleX(0.9727);transform-origin:0 0;-webkit-text-stroke:0.1px #333;">Cut</div><div style="position:absolute;left:42.60px;top:38.91px;font-size:7.2px;line-height:7.2px;font-weight:normal;font-style:normal;color:#333;white-space:pre;transform:scaleX(0.9471);transform-origin:0 0;-webkit-text-stroke:0.1px #333;">Copy</div><div style="position:absolute;left:41.62px;top:53.11px;font-size:7.2px;line-height:7.2px;font-weight:normal;font-style:normal;color:#333;white-space:pre;transform:scaleX(0.9761);transform-origin:0 0;-webkit-text-stroke:0.1px #333;">Format Painter</div><div style="position:absolute;left:103.90px;top:29.74px;font-size:7.4px;line-height:7.4px;font-weight:normal;font-style:normal;color:#333;white-space:pre;transform:scaleX(0.9429);transform-origin:0 0;-webkit-text-stroke:0.1px #333;">Calibri</div><div style="position:absolute;left:176.34px;top:29.74px;font-size:7.4px;line-height:7.4px;font-weight:normal;font-style:normal;color:#333;white-space:pre;transform:scaleX(0.9571);transform-origin:0 0;-webkit-text-stroke:0.1px #333;">14</div><div style="position:absolute;left:203.70px;top:28.51px;font-size:9.2px;line-height:9.2px;font-weight:normal;font-style:normal;color:#444;white-space:pre;transform:scaleX(1.0500);transform-origin:0 0;-webkit-text-stroke:0.1px #444;">A</div><div style="position:absolute;left:218.60px;top:29.53px;font-size:8.0px;line-height:8.0px;font-weight:normal;font-style:normal;color:#444;white-space:pre;transform:scaleX(1.1800);transform-origin:0 0;-webkit-text-stroke:0.1px #444;">A</div><div style="position:absolute;left:106.20px;top:47.77px;font-size:7.6px;line-height:7.6px;font-weight:bold;font-style:normal;color:#444;white-space:pre;transform:scaleX(0.8400);transform-origin:0 0;-webkit-text-stroke:0.1px #444;">B</div><div style="position:absolute;left:120.70px;top:47.77px;font-size:7.6px;line-height:7.6px;font-weight:normal;font-style:italic;color:#555;white-space:pre;transform:scaleX(1.6000);transform-origin:0 0;-webkit-text-stroke:0.1px #555;">I</div><div style="position:absolute;left:132.08px;top:47.77px;font-size:7.6px;line-height:7.6px;font-weight:normal;font-style:normal;color:#777;white-space:pre;transform:scaleX(1.3250);transform-origin:0 0;-webkit-text-stroke:0.1px #777;">U</div><div style="position:absolute;left:330.00px;top:30.21px;font-size:7.2px;line-height:7.2px;font-weight:normal;font-style:normal;color:#333;white-space:pre;transform:scaleX(0.9375);transform-origin:0 0;-webkit-text-stroke:0.1px #333;">Wrap Text</div><div style="position:absolute;left:328.98px;top:48.71px;font-size:7.2px;line-height:7.2px;font-weight:normal;font-style:normal;color:#333;white-space:pre;transform:scaleX(1.0204);transform-origin:0 0;-webkit-text-stroke:0.1px #333;">Merge & Center</div><div style="position:absolute;left:404.50px;top:29.74px;font-size:7.4px;line-height:7.4px;font-weight:normal;font-style:normal;color:#333;white-space:pre;transform:scaleX(0.8654);transform-origin:0 0;-webkit-text-stroke:0.1px #333;">General</div><div style="position:absolute;left:427.50px;top:47.33px;font-size:10.0px;line-height:10.0px;font-weight:normal;font-style:normal;color:#444;white-space:pre;transform:scaleX(0.9222);transform-origin:0 0;-webkit-text-stroke:0.25px #444;">%</div><div style="position:absolute;left:465.40px;top:47.06px;font-size:5.6px;line-height:5.6px;font-weight:normal;font-style:normal;color:#555;white-space:pre;-webkit-text-stroke:0.1px #555;">.0</div><div style="position:absolute;left:461.40px;top:51.76px;font-size:5.6px;line-height:5.6px;font-weight:normal;font-style:normal;color:#555;white-space:pre;-webkit-text-stroke:0.1px #555;">.00</div><div style="position:absolute;left:475.40px;top:47.06px;font-size:5.6px;line-height:5.6px;font-weight:normal;font-style:normal;color:#555;white-space:pre;-webkit-text-stroke:0.1px #555;">.00</div><div style="position:absolute;left:479.40px;top:51.76px;font-size:5.6px;line-height:5.6px;font-weight:normal;font-style:normal;color:#555;white-space:pre;-webkit-text-stroke:0.1px #555;">.0</div><div style="position:absolute;left:498.20px;top:44.61px;font-size:7.2px;line-height:7.2px;font-weight:normal;font-style:normal;color:#333;white-space:pre;-webkit-text-stroke:0.1px #333;">Conditional</div><div style="position:absolute;left:494.54px;top:53.21px;font-size:7.2px;line-height:7.2px;font-weight:normal;font-style:normal;color:#333;white-space:pre;transform:scaleX(1.0576);transform-origin:0 0;-webkit-text-stroke:0.1px #333;">Formatting</div><div style="position:absolute;left:538.82px;top:44.61px;font-size:7.2px;line-height:7.2px;font-weight:normal;font-style:normal;color:#333;white-space:pre;transform:scaleX(0.9839);transform-origin:0 0;-webkit-text-stroke:0.1px #333;">Format as</div><div style="position:absolute;left:543.08px;top:53.21px;font-size:7.2px;line-height:7.2px;font-weight:normal;font-style:normal;color:#333;white-space:pre;transform:scaleX(1.0250);transform-origin:0 0;-webkit-text-stroke:0.1px #333;">Table</div><div style="position:absolute;left:577.44px;top:29.10px;font-size:7.8px;line-height:7.8px;font-weight:normal;font-style:normal;color:#222;white-space:pre;transform:scaleX(1.0625);transform-origin:0 0;">Normal</div><div style="position:absolute;left:639.88px;top:29.10px;font-size:7.8px;line-height:7.8px;font-weight:normal;font-style:normal;color:#9c0006;white-space:pre;transform:scaleX(1.1250);transform-origin:0 0;">Bad</div><div style="position:absolute;left:578.50px;top:45.70px;font-size:7.8px;line-height:7.8px;font-weight:normal;font-style:normal;color:#006100;white-space:pre;transform:scaleX(1.0263);transform-origin:0 0;">Good</div><div style="position:absolute;left:639.92px;top:45.70px;font-size:7.8px;line-height:7.8px;font-weight:normal;font-style:normal;color:#9c5700;white-space:pre;transform:scaleX(1.0833);transform-origin:0 0;">Neutral</div><div style="position:absolute;left:720.35px;top:44.11px;font-size:7.2px;line-height:7.2px;font-weight:normal;font-style:normal;color:#333;white-space:pre;transform:scaleX(1.0250);transform-origin:0 0;-webkit-text-stroke:0.1px #333;">Insert</div><div style="position:absolute;left:744.79px;top:44.11px;font-size:7.2px;line-height:7.2px;font-weight:normal;font-style:normal;color:#333;white-space:pre;transform:scaleX(1.0105);transform-origin:0 0;-webkit-text-stroke:0.1px #333;">Delete</div><div style="position:absolute;left:6.34px;top:86.74px;font-size:7.4px;line-height:7.4px;font-weight:normal;font-style:normal;color:#333;white-space:pre;transform:scaleX(1.0625);transform-origin:0 0;-webkit-text-stroke:0.1px #333;">B5</div><div style="position:absolute;left:168.97px;top:86.30px;font-size:7.8px;line-height:7.8px;font-weight:normal;font-style:normal;color:#333;white-space:pre;transform:scaleX(1.0333);transform-origin:0 0;-webkit-text-stroke:0.1px #333;">Row Labels</div><div style="position:absolute;left:31.50px;top:106.07px;font-size:7.6px;line-height:7.6px;font-weight:normal;font-style:normal;color:#505050;white-space:pre;">A</div><div style="position:absolute;left:100.50px;top:106.07px;font-size:7.6px;line-height:7.6px;font-weight:normal;font-style:normal;color:#505050;white-space:pre;">B</div><div style="position:absolute;left:207.00px;top:106.07px;font-size:7.6px;line-height:7.6px;font-weight:normal;font-style:normal;color:#505050;white-space:pre;">C</div><div style="position:absolute;left:322.15px;top:106.07px;font-size:7.6px;line-height:7.6px;font-weight:normal;font-style:normal;color:#505050;white-space:pre;">D</div><div style="position:absolute;left:437.15px;top:106.07px;font-size:7.6px;line-height:7.6px;font-weight:normal;font-style:normal;color:#505050;white-space:pre;">E</div><div style="position:absolute;left:527.75px;top:106.07px;font-size:7.6px;line-height:7.6px;font-weight:normal;font-style:normal;color:#505050;white-space:pre;">F</div><div style="position:absolute;left:606.00px;top:106.07px;font-size:7.6px;line-height:7.6px;font-weight:normal;font-style:normal;color:#505050;white-space:pre;">G</div><div style="position:absolute;left:667.25px;top:106.07px;font-size:7.6px;line-height:7.6px;font-weight:normal;font-style:normal;color:#505050;white-space:pre;">H</div><div style="position:absolute;left:706.25px;top:106.07px;font-size:7.6px;line-height:7.6px;font-weight:normal;font-style:normal;color:#505050;white-space:pre;">I</div><div style="position:absolute;left:743.75px;top:106.07px;font-size:7.6px;line-height:7.6px;font-weight:normal;font-style:normal;color:#505050;white-space:pre;">J</div><div style="position:absolute;left:4.70px;top:120.17px;font-size:7.6px;line-height:7.6px;font-weight:normal;font-style:normal;color:#5a5a5a;white-space:pre;">1</div><div style="position:absolute;left:5.20px;top:134.77px;font-size:7.6px;line-height:7.6px;font-weight:normal;font-style:normal;color:#5a5a5a;white-space:pre;">2</div><div style="position:absolute;left:4.70px;top:154.77px;font-size:7.6px;line-height:7.6px;font-weight:normal;font-style:normal;color:#5a5a5a;white-space:pre;">3</div><div style="position:absolute;left:5.20px;top:169.67px;font-size:7.6px;line-height:7.6px;font-weight:normal;font-style:normal;color:#5a5a5a;white-space:pre;">4</div><div style="position:absolute;left:5.20px;top:197.67px;font-size:7.6px;line-height:7.6px;font-weight:normal;font-style:normal;color:#5a5a5a;white-space:pre;">5</div><div style="position:absolute;left:5.20px;top:212.42px;font-size:7.6px;line-height:7.6px;font-weight:normal;font-style:normal;color:#5a5a5a;white-space:pre;">6</div><div style="position:absolute;left:4.70px;top:227.17px;font-size:7.6px;line-height:7.6px;font-weight:normal;font-style:normal;color:#5a5a5a;white-space:pre;">7</div><div style="position:absolute;left:5.20px;top:241.92px;font-size:7.6px;line-height:7.6px;font-weight:normal;font-style:normal;color:#5a5a5a;white-space:pre;">8</div><div style="position:absolute;left:5.20px;top:256.67px;font-size:7.6px;line-height:7.6px;font-weight:normal;font-style:normal;color:#5a5a5a;white-space:pre;">9</div><div style="position:absolute;left:2.70px;top:271.42px;font-size:7.6px;line-height:7.6px;font-weight:normal;font-style:normal;color:#5a5a5a;white-space:pre;">10</div><div style="position:absolute;left:3.20px;top:286.17px;font-size:7.6px;line-height:7.6px;font-weight:normal;font-style:normal;color:#5a5a5a;white-space:pre;">11</div><div style="position:absolute;left:2.70px;top:300.92px;font-size:7.6px;line-height:7.6px;font-weight:normal;font-style:normal;color:#5a5a5a;white-space:pre;">12</div><div style="position:absolute;left:2.70px;top:315.67px;font-size:7.6px;line-height:7.6px;font-weight:normal;font-style:normal;color:#5a5a5a;white-space:pre;">13</div><div style="position:absolute;left:2.70px;top:330.42px;font-size:7.6px;line-height:7.6px;font-weight:normal;font-style:normal;color:#5a5a5a;white-space:pre;">14</div><div style="position:absolute;left:2.70px;top:345.17px;font-size:7.6px;line-height:7.6px;font-weight:normal;font-style:normal;color:#5a5a5a;white-space:pre;">15</div><div style="position:absolute;left:2.70px;top:359.92px;font-size:7.6px;line-height:7.6px;font-weight:normal;font-style:normal;color:#5a5a5a;white-space:pre;">16</div><div style="position:absolute;left:2.70px;top:374.67px;font-size:7.6px;line-height:7.6px;font-weight:normal;font-style:normal;color:#5a5a5a;white-space:pre;">17</div><div style="position:absolute;left:2.70px;top:389.42px;font-size:7.6px;line-height:7.6px;font-weight:normal;font-style:normal;color:#5a5a5a;white-space:pre;">18</div><div style="position:absolute;left:2.70px;top:404.17px;font-size:7.6px;line-height:7.6px;font-weight:normal;font-style:normal;color:#5a5a5a;white-space:pre;">19</div><div style="position:absolute;left:3.20px;top:418.92px;font-size:7.6px;line-height:7.6px;font-weight:normal;font-style:normal;color:#5a5a5a;white-space:pre;">20</div><div style="position:absolute;left:3.20px;top:433.67px;font-size:7.6px;line-height:7.6px;font-weight:normal;font-style:normal;color:#5a5a5a;white-space:pre;">21</div><div style="position:absolute;left:3.20px;top:448.42px;font-size:7.6px;line-height:7.6px;font-weight:normal;font-style:normal;color:#5a5a5a;white-space:pre;">22</div><div style="position:absolute;left:3.20px;top:463.17px;font-size:7.6px;line-height:7.6px;font-weight:normal;font-style:normal;color:#5a5a5a;white-space:pre;">23</div><div style="position:absolute;left:3.20px;top:477.92px;font-size:7.6px;line-height:7.6px;font-weight:normal;font-style:normal;color:#5a5a5a;white-space:pre;">24</div><div style="position:absolute;left:3.20px;top:492.67px;font-size:7.6px;line-height:7.6px;font-weight:normal;font-style:normal;color:#5a5a5a;white-space:pre;">25</div><div style="position:absolute;left:3.20px;top:507.42px;font-size:7.6px;line-height:7.6px;font-weight:normal;font-style:normal;color:#5a5a5a;white-space:pre;">26</div><div style="position:absolute;left:3.20px;top:522.17px;font-size:7.6px;line-height:7.6px;font-weight:normal;font-style:normal;color:#5a5a5a;white-space:pre;">27</div><div style="position:absolute;left:3.20px;top:536.92px;font-size:7.6px;line-height:7.6px;font-weight:normal;font-style:normal;color:#5a5a5a;white-space:pre;">28</div><div style="position:absolute;left:3.20px;top:551.67px;font-size:7.6px;line-height:7.6px;font-weight:normal;font-style:normal;color:#5a5a5a;white-space:pre;">29</div><div style="position:absolute;left:64.85px;top:148.54px;font-size:14.6px;line-height:14.6px;font-weight:bold;font-style:normal;color:#111;white-space:pre;transform:scaleX(0.9505);transform-origin:0 0;-webkit-text-stroke:0.1px #111;">Modern aka Compact Layout</div><div style="position:absolute;left:472.61px;top:148.54px;font-size:14.6px;line-height:14.6px;font-weight:bold;font-style:normal;color:#111;white-space:pre;transform:scaleX(0.8873);transform-origin:0 0;-webkit-text-stroke:0.1px #111;">Classic Layout</div><div style="position:absolute;left:76.94px;top:196.92px;font-size:9.9px;line-height:9.9px;font-weight:bold;font-style:normal;color:#ffffff;white-space:pre;transform:scaleX(0.9556);transform-origin:0 0;-webkit-text-stroke:0.1px #ffffff;">Row Labels</div><div style="position:absolute;left:162.78px;top:196.92px;font-size:9.9px;line-height:9.9px;font-weight:bold;font-style:normal;color:#ffffff;white-space:pre;transform:scaleX(0.9737);transform-origin:0 0;-webkit-text-stroke:0.1px #ffffff;">Sum of Sale Amount</div><div style="position:absolute;left:95.80px;top:211.73px;font-size:10.0px;line-height:10.0px;font-weight:bold;font-style:normal;color:#111;white-space:pre;transform:scaleX(0.8944);transform-origin:0 0;">Jeff</div><div style="position:absolute;left:231.60px;top:211.73px;font-size:10.0px;line-height:10.0px;font-weight:bold;font-style:normal;color:#111;white-space:pre;transform:scaleX(1.0500);transform-origin:0 0;">£3,150</div><div style="position:absolute;left:95.44px;top:226.48px;font-size:10.0px;line-height:10.0px;font-weight:normal;font-style:normal;color:#2e3a50;white-space:pre;transform:scaleX(1.0200);transform-origin:0 0;-webkit-text-stroke:0.2px #2e3a50;">Jan</div><div style="position:absolute;left:231.60px;top:226.48px;font-size:10.0px;line-height:10.0px;font-weight:normal;font-style:normal;color:#2e3a50;white-space:pre;transform:scaleX(1.0500);transform-origin:0 0;-webkit-text-stroke:0.2px #2e3a50;">£1,250</div><div style="position:absolute;left:94.42px;top:241.23px;font-size:10.0px;line-height:10.0px;font-weight:normal;font-style:normal;color:#2e3a50;white-space:pre;transform:scaleX(1.0200);transform-origin:0 0;-webkit-text-stroke:0.2px #2e3a50;">Feb</div><div style="position:absolute;left:231.60px;top:241.23px;font-size:10.0px;line-height:10.0px;font-weight:normal;font-style:normal;color:#2e3a50;white-space:pre;transform:scaleX(1.0500);transform-origin:0 0;-webkit-text-stroke:0.2px #2e3a50;">£1,050</div><div style="position:absolute;left:94.42px;top:255.98px;font-size:10.0px;line-height:10.0px;font-weight:normal;font-style:normal;color:#2e3a50;white-space:pre;transform:scaleX(1.0200);transform-origin:0 0;-webkit-text-stroke:0.2px #2e3a50;">Mar</div><div style="position:absolute;left:240.00px;top:255.98px;font-size:10.0px;line-height:10.0px;font-weight:normal;font-style:normal;color:#2e3a50;white-space:pre;transform:scaleX(1.0500);transform-origin:0 0;-webkit-text-stroke:0.2px #2e3a50;">£550</div><div style="position:absolute;left:95.95px;top:270.74px;font-size:10.0px;line-height:10.0px;font-weight:normal;font-style:normal;color:#2e3a50;white-space:pre;transform:scaleX(1.0200);transform-origin:0 0;-webkit-text-stroke:0.2px #2e3a50;">Apr</div><div style="position:absolute;left:240.00px;top:270.74px;font-size:10.0px;line-height:10.0px;font-weight:normal;font-style:normal;color:#2e3a50;white-space:pre;transform:scaleX(1.0500);transform-origin:0 0;-webkit-text-stroke:0.2px #2e3a50;">£300</div><div style="position:absolute;left:89.03px;top:285.49px;font-size:10.0px;line-height:10.0px;font-weight:bold;font-style:normal;color:#111;white-space:pre;transform:scaleX(0.9655);transform-origin:0 0;">Penny</div><div style="position:absolute;left:231.60px;top:285.49px;font-size:10.0px;line-height:10.0px;font-weight:bold;font-style:normal;color:#111;white-space:pre;transform:scaleX(1.0500);transform-origin:0 0;">£3,690</div><div style="position:absolute;left:95.44px;top:300.24px;font-size:10.0px;line-height:10.0px;font-weight:normal;font-style:normal;color:#2e3a50;white-space:pre;transform:scaleX(1.0200);transform-origin:0 0;-webkit-text-stroke:0.2px #2e3a50;">Jan</div><div style="position:absolute;left:231.60px;top:300.24px;font-size:10.0px;line-height:10.0px;font-weight:normal;font-style:normal;color:#2e3a50;white-space:pre;transform:scaleX(1.0500);transform-origin:0 0;-webkit-text-stroke:0.2px #2e3a50;">£1,295</div><div style="position:absolute;left:94.42px;top:314.99px;font-size:10.0px;line-height:10.0px;font-weight:normal;font-style:normal;color:#2e3a50;white-space:pre;transform:scaleX(1.0200);transform-origin:0 0;-webkit-text-stroke:0.2px #2e3a50;">Feb</div><div style="position:absolute;left:240.00px;top:314.99px;font-size:10.0px;line-height:10.0px;font-weight:normal;font-style:normal;color:#2e3a50;white-space:pre;transform:scaleX(1.0500);transform-origin:0 0;-webkit-text-stroke:0.2px #2e3a50;">£800</div><div style="position:absolute;left:94.42px;top:329.74px;font-size:10.0px;line-height:10.0px;font-weight:normal;font-style:normal;color:#2e3a50;white-space:pre;transform:scaleX(1.0200);transform-origin:0 0;-webkit-text-stroke:0.2px #2e3a50;">Mar</div><div style="position:absolute;left:240.00px;top:329.74px;font-size:10.0px;line-height:10.0px;font-weight:normal;font-style:normal;color:#2e3a50;white-space:pre;transform:scaleX(1.0500);transform-origin:0 0;-webkit-text-stroke:0.2px #2e3a50;">£695</div><div style="position:absolute;left:95.95px;top:344.49px;font-size:10.0px;line-height:10.0px;font-weight:normal;font-style:normal;color:#2e3a50;white-space:pre;transform:scaleX(1.0200);transform-origin:0 0;-webkit-text-stroke:0.2px #2e3a50;">Apr</div><div style="position:absolute;left:240.00px;top:344.49px;font-size:10.0px;line-height:10.0px;font-weight:normal;font-style:normal;color:#2e3a50;white-space:pre;transform:scaleX(1.0500);transform-origin:0 0;-webkit-text-stroke:0.2px #2e3a50;">£900</div><div style="position:absolute;left:90.70px;top:359.24px;font-size:10.0px;line-height:10.0px;font-weight:bold;font-style:normal;color:#111;white-space:pre;transform:scaleX(0.9923);transform-origin:0 0;">Steve</div><div style="position:absolute;left:231.60px;top:359.24px;font-size:10.0px;line-height:10.0px;font-weight:bold;font-style:normal;color:#111;white-space:pre;transform:scaleX(1.0500);transform-origin:0 0;">£1,425</div><div style="position:absolute;left:95.44px;top:373.99px;font-size:10.0px;line-height:10.0px;font-weight:normal;font-style:normal;color:#2e3a50;white-space:pre;transform:scaleX(1.0200);transform-origin:0 0;-webkit-text-stroke:0.2px #2e3a50;">Jan</div><div style="position:absolute;left:240.00px;top:373.99px;font-size:10.0px;line-height:10.0px;font-weight:normal;font-style:normal;color:#2e3a50;white-space:pre;transform:scaleX(1.0500);transform-origin:0 0;-webkit-text-stroke:0.2px #2e3a50;">£525</div><div style="position:absolute;left:94.42px;top:388.74px;font-size:10.0px;line-height:10.0px;font-weight:normal;font-style:normal;color:#2e3a50;white-space:pre;transform:scaleX(1.0200);transform-origin:0 0;-webkit-text-stroke:0.2px #2e3a50;">Feb</div><div style="position:absolute;left:240.00px;top:388.74px;font-size:10.0px;line-height:10.0px;font-weight:normal;font-style:normal;color:#2e3a50;white-space:pre;transform:scaleX(1.0500);transform-origin:0 0;-webkit-text-stroke:0.2px #2e3a50;">£100</div><div style="position:absolute;left:94.42px;top:403.49px;font-size:10.0px;line-height:10.0px;font-weight:normal;font-style:normal;color:#2e3a50;white-space:pre;transform:scaleX(1.0200);transform-origin:0 0;-webkit-text-stroke:0.2px #2e3a50;">Mar</div><div style="position:absolute;left:240.00px;top:403.49px;font-size:10.0px;line-height:10.0px;font-weight:normal;font-style:normal;color:#2e3a50;white-space:pre;transform:scaleX(1.0500);transform-origin:0 0;-webkit-text-stroke:0.2px #2e3a50;">£400</div><div style="position:absolute;left:95.95px;top:418.24px;font-size:10.0px;line-height:10.0px;font-weight:normal;font-style:normal;color:#2e3a50;white-space:pre;transform:scaleX(1.0200);transform-origin:0 0;-webkit-text-stroke:0.2px #2e3a50;">Apr</div><div style="position:absolute;left:240.00px;top:418.24px;font-size:10.0px;line-height:10.0px;font-weight:normal;font-style:normal;color:#2e3a50;white-space:pre;transform:scaleX(1.0500);transform-origin:0 0;-webkit-text-stroke:0.2px #2e3a50;">£400</div><div style="position:absolute;left:77.20px;top:432.99px;font-size:10.0px;line-height:10.0px;font-weight:bold;font-style:normal;color:#ffffff;white-space:pre;transform:scaleX(0.9745);transform-origin:0 0;">Grand Total</div><div style="position:absolute;left:231.80px;top:432.99px;font-size:10.0px;line-height:10.0px;font-weight:bold;font-style:normal;color:#ffffff;white-space:pre;transform:scaleX(1.0500);transform-origin:0 0;">£8,265</div><div style="position:absolute;left:392.12px;top:196.82px;font-size:9.9px;line-height:9.9px;font-weight:bold;font-style:normal;color:#ffffff;white-space:pre;transform:scaleX(0.9779);transform-origin:0 0;-webkit-text-stroke:0.1px #ffffff;">Sum of Sale Amount</div><div style="position:absolute;left:413.27px;top:211.42px;font-size:9.9px;line-height:9.9px;font-weight:bold;font-style:normal;color:#ffffff;white-space:pre;transform:scaleX(1.0280);transform-origin:0 0;-webkit-text-stroke:0.1px #ffffff;">Staff Name</div><div style="position:absolute;left:514.37px;top:211.42px;font-size:9.9px;line-height:9.9px;font-weight:bold;font-style:normal;color:#ffffff;white-space:pre;transform:scaleX(1.1286);transform-origin:0 0;-webkit-text-stroke:0.1px #ffffff;">Month</div><div style="position:absolute;left:598.50px;top:211.42px;font-size:9.9px;line-height:9.9px;font-weight:bold;font-style:normal;color:#ffffff;white-space:pre;transform:scaleX(1.0545);transform-origin:0 0;-webkit-text-stroke:0.1px #ffffff;">Total</div><div style="position:absolute;left:432.00px;top:226.48px;font-size:10.0px;line-height:10.0px;font-weight:bold;font-style:normal;color:#111;white-space:pre;transform:scaleX(0.8778);transform-origin:0 0;">Jeff</div><div style="position:absolute;left:523.14px;top:226.48px;font-size:10.0px;line-height:10.0px;font-weight:normal;font-style:normal;color:#2e3a50;white-space:pre;transform:scaleX(1.0200);transform-origin:0 0;-webkit-text-stroke:0.2px #2e3a50;">Jan</div><div style="position:absolute;left:617.90px;top:226.48px;font-size:10.0px;line-height:10.0px;font-weight:normal;font-style:normal;color:#2e3a50;white-space:pre;transform:scaleX(1.0500);transform-origin:0 0;-webkit-text-stroke:0.2px #2e3a50;">£1,250</div><div style="position:absolute;left:522.12px;top:241.23px;font-size:10.0px;line-height:10.0px;font-weight:normal;font-style:normal;color:#2e3a50;white-space:pre;transform:scaleX(1.0200);transform-origin:0 0;-webkit-text-stroke:0.2px #2e3a50;">Feb</div><div style="position:absolute;left:617.90px;top:241.23px;font-size:10.0px;line-height:10.0px;font-weight:normal;font-style:normal;color:#2e3a50;white-space:pre;transform:scaleX(1.0500);transform-origin:0 0;-webkit-text-stroke:0.2px #2e3a50;">£1,050</div><div style="position:absolute;left:522.12px;top:255.98px;font-size:10.0px;line-height:10.0px;font-weight:normal;font-style:normal;color:#2e3a50;white-space:pre;transform:scaleX(1.0200);transform-origin:0 0;-webkit-text-stroke:0.2px #2e3a50;">Mar</div><div style="position:absolute;left:626.30px;top:255.98px;font-size:10.0px;line-height:10.0px;font-weight:normal;font-style:normal;color:#2e3a50;white-space:pre;transform:scaleX(1.0500);transform-origin:0 0;-webkit-text-stroke:0.2px #2e3a50;">£550</div><div style="position:absolute;left:523.65px;top:270.74px;font-size:10.0px;line-height:10.0px;font-weight:normal;font-style:normal;color:#2e3a50;white-space:pre;transform:scaleX(1.0200);transform-origin:0 0;-webkit-text-stroke:0.2px #2e3a50;">Apr</div><div style="position:absolute;left:626.30px;top:270.74px;font-size:10.0px;line-height:10.0px;font-weight:normal;font-style:normal;color:#2e3a50;white-space:pre;transform:scaleX(1.0500);transform-origin:0 0;-webkit-text-stroke:0.2px #2e3a50;">£300</div><div style="position:absolute;left:418.30px;top:285.49px;font-size:10.0px;line-height:10.0px;font-weight:bold;font-style:normal;color:#111;white-space:pre;transform:scaleX(0.9930);transform-origin:0 0;">Jeff Total</div><div style="position:absolute;left:617.90px;top:285.49px;font-size:10.0px;line-height:10.0px;font-weight:bold;font-style:normal;color:#111;white-space:pre;transform:scaleX(1.0500);transform-origin:0 0;">£3,150</div><div style="position:absolute;left:424.62px;top:300.24px;font-size:10.0px;line-height:10.0px;font-weight:bold;font-style:normal;color:#111;white-space:pre;transform:scaleX(0.9793);transform-origin:0 0;">Penny</div><div style="position:absolute;left:523.14px;top:300.24px;font-size:10.0px;line-height:10.0px;font-weight:normal;font-style:normal;color:#2e3a50;white-space:pre;transform:scaleX(1.0200);transform-origin:0 0;-webkit-text-stroke:0.2px #2e3a50;">Jan</div><div style="position:absolute;left:617.90px;top:300.24px;font-size:10.0px;line-height:10.0px;font-weight:normal;font-style:normal;color:#2e3a50;white-space:pre;transform:scaleX(1.0500);transform-origin:0 0;-webkit-text-stroke:0.2px #2e3a50;">£1,295</div><div style="position:absolute;left:522.12px;top:314.99px;font-size:10.0px;line-height:10.0px;font-weight:normal;font-style:normal;color:#2e3a50;white-space:pre;transform:scaleX(1.0200);transform-origin:0 0;-webkit-text-stroke:0.2px #2e3a50;">Feb</div><div style="position:absolute;left:626.30px;top:314.99px;font-size:10.0px;line-height:10.0px;font-weight:normal;font-style:normal;color:#2e3a50;white-space:pre;transform:scaleX(1.0500);transform-origin:0 0;-webkit-text-stroke:0.2px #2e3a50;">£800</div><div style="position:absolute;left:522.12px;top:329.74px;font-size:10.0px;line-height:10.0px;font-weight:normal;font-style:normal;color:#2e3a50;white-space:pre;transform:scaleX(1.0200);transform-origin:0 0;-webkit-text-stroke:0.2px #2e3a50;">Mar</div><div style="position:absolute;left:626.30px;top:329.74px;font-size:10.0px;line-height:10.0px;font-weight:normal;font-style:normal;color:#2e3a50;white-space:pre;transform:scaleX(1.0500);transform-origin:0 0;-webkit-text-stroke:0.2px #2e3a50;">£695</div><div style="position:absolute;left:523.65px;top:344.49px;font-size:10.0px;line-height:10.0px;font-weight:normal;font-style:normal;color:#2e3a50;white-space:pre;transform:scaleX(1.0200);transform-origin:0 0;-webkit-text-stroke:0.2px #2e3a50;">Apr</div><div style="position:absolute;left:626.30px;top:344.49px;font-size:10.0px;line-height:10.0px;font-weight:normal;font-style:normal;color:#2e3a50;white-space:pre;transform:scaleX(1.0500);transform-origin:0 0;-webkit-text-stroke:0.2px #2e3a50;">£900</div><div style="position:absolute;left:411.82px;top:359.24px;font-size:10.0px;line-height:10.0px;font-weight:bold;font-style:normal;color:#111;white-space:pre;transform:scaleX(0.9818);transform-origin:0 0;">Penny Total</div><div style="position:absolute;left:617.90px;top:359.24px;font-size:10.0px;line-height:10.0px;font-weight:bold;font-style:normal;color:#111;white-space:pre;transform:scaleX(1.0500);transform-origin:0 0;">£3,690</div><div style="position:absolute;left:426.70px;top:373.99px;font-size:10.0px;line-height:10.0px;font-weight:bold;font-style:normal;color:#111;white-space:pre;transform:scaleX(0.9808);transform-origin:0 0;">Steve</div><div style="position:absolute;left:523.14px;top:373.99px;font-size:10.0px;line-height:10.0px;font-weight:normal;font-style:normal;color:#2e3a50;white-space:pre;transform:scaleX(1.0200);transform-origin:0 0;-webkit-text-stroke:0.2px #2e3a50;">Jan</div><div style="position:absolute;left:626.30px;top:373.99px;font-size:10.0px;line-height:10.0px;font-weight:normal;font-style:normal;color:#2e3a50;white-space:pre;transform:scaleX(1.0500);transform-origin:0 0;-webkit-text-stroke:0.2px #2e3a50;">£525</div><div style="position:absolute;left:522.12px;top:388.74px;font-size:10.0px;line-height:10.0px;font-weight:normal;font-style:normal;color:#2e3a50;white-space:pre;transform:scaleX(1.0200);transform-origin:0 0;-webkit-text-stroke:0.2px #2e3a50;">Feb</div><div style="position:absolute;left:626.30px;top:388.74px;font-size:10.0px;line-height:10.0px;font-weight:normal;font-style:normal;color:#2e3a50;white-space:pre;transform:scaleX(1.0500);transform-origin:0 0;-webkit-text-stroke:0.2px #2e3a50;">£100</div><div style="position:absolute;left:522.12px;top:403.49px;font-size:10.0px;line-height:10.0px;font-weight:normal;font-style:normal;color:#2e3a50;white-space:pre;transform:scaleX(1.0200);transform-origin:0 0;-webkit-text-stroke:0.2px #2e3a50;">Mar</div><div style="position:absolute;left:626.30px;top:403.49px;font-size:10.0px;line-height:10.0px;font-weight:normal;font-style:normal;color:#2e3a50;white-space:pre;transform:scaleX(1.0500);transform-origin:0 0;-webkit-text-stroke:0.2px #2e3a50;">£400</div><div style="position:absolute;left:523.65px;top:418.24px;font-size:10.0px;line-height:10.0px;font-weight:normal;font-style:normal;color:#2e3a50;white-space:pre;transform:scaleX(1.0200);transform-origin:0 0;-webkit-text-stroke:0.2px #2e3a50;">Apr</div><div style="position:absolute;left:626.30px;top:418.24px;font-size:10.0px;line-height:10.0px;font-weight:normal;font-style:normal;color:#2e3a50;white-space:pre;transform:scaleX(1.0500);transform-origin:0 0;-webkit-text-stroke:0.2px #2e3a50;">£400</div><div style="position:absolute;left:414.00px;top:432.99px;font-size:10.0px;line-height:10.0px;font-weight:bold;font-style:normal;color:#111;white-space:pre;transform:scaleX(0.9942);transform-origin:0 0;">Steve Total</div><div style="position:absolute;left:617.90px;top:432.99px;font-size:10.0px;line-height:10.0px;font-weight:bold;font-style:normal;color:#111;white-space:pre;transform:scaleX(1.0500);transform-origin:0 0;">£1,425</div><div style="position:absolute;left:413.50px;top:447.74px;font-size:10.0px;line-height:10.0px;font-weight:bold;font-style:normal;color:#ffffff;white-space:pre;transform:scaleX(0.9691);transform-origin:0 0;">Grand Total</div><div style="position:absolute;left:618.10px;top:447.74px;font-size:10.0px;line-height:10.0px;font-weight:bold;font-style:normal;color:#ffffff;white-space:pre;transform:scaleX(1.0500);transform-origin:0 0;">£8,265</div><div style="position:absolute;left:65.60px;top:568.52px;font-size:8.6px;line-height:8.6px;font-weight:bold;font-style:normal;color:#285a3a;white-space:pre;transform:scaleX(0.8607);transform-origin:0 0;-webkit-text-stroke:0.15px #285a3a;">Sheet1</div><div style="position:absolute;left:5.89px;top:583.70px;font-size:7.8px;line-height:7.8px;font-weight:normal;font-style:normal;color:#e4ece6;white-space:pre;transform:scaleX(0.8136);transform-origin:0 0;">Ready</div>
</body></html>
